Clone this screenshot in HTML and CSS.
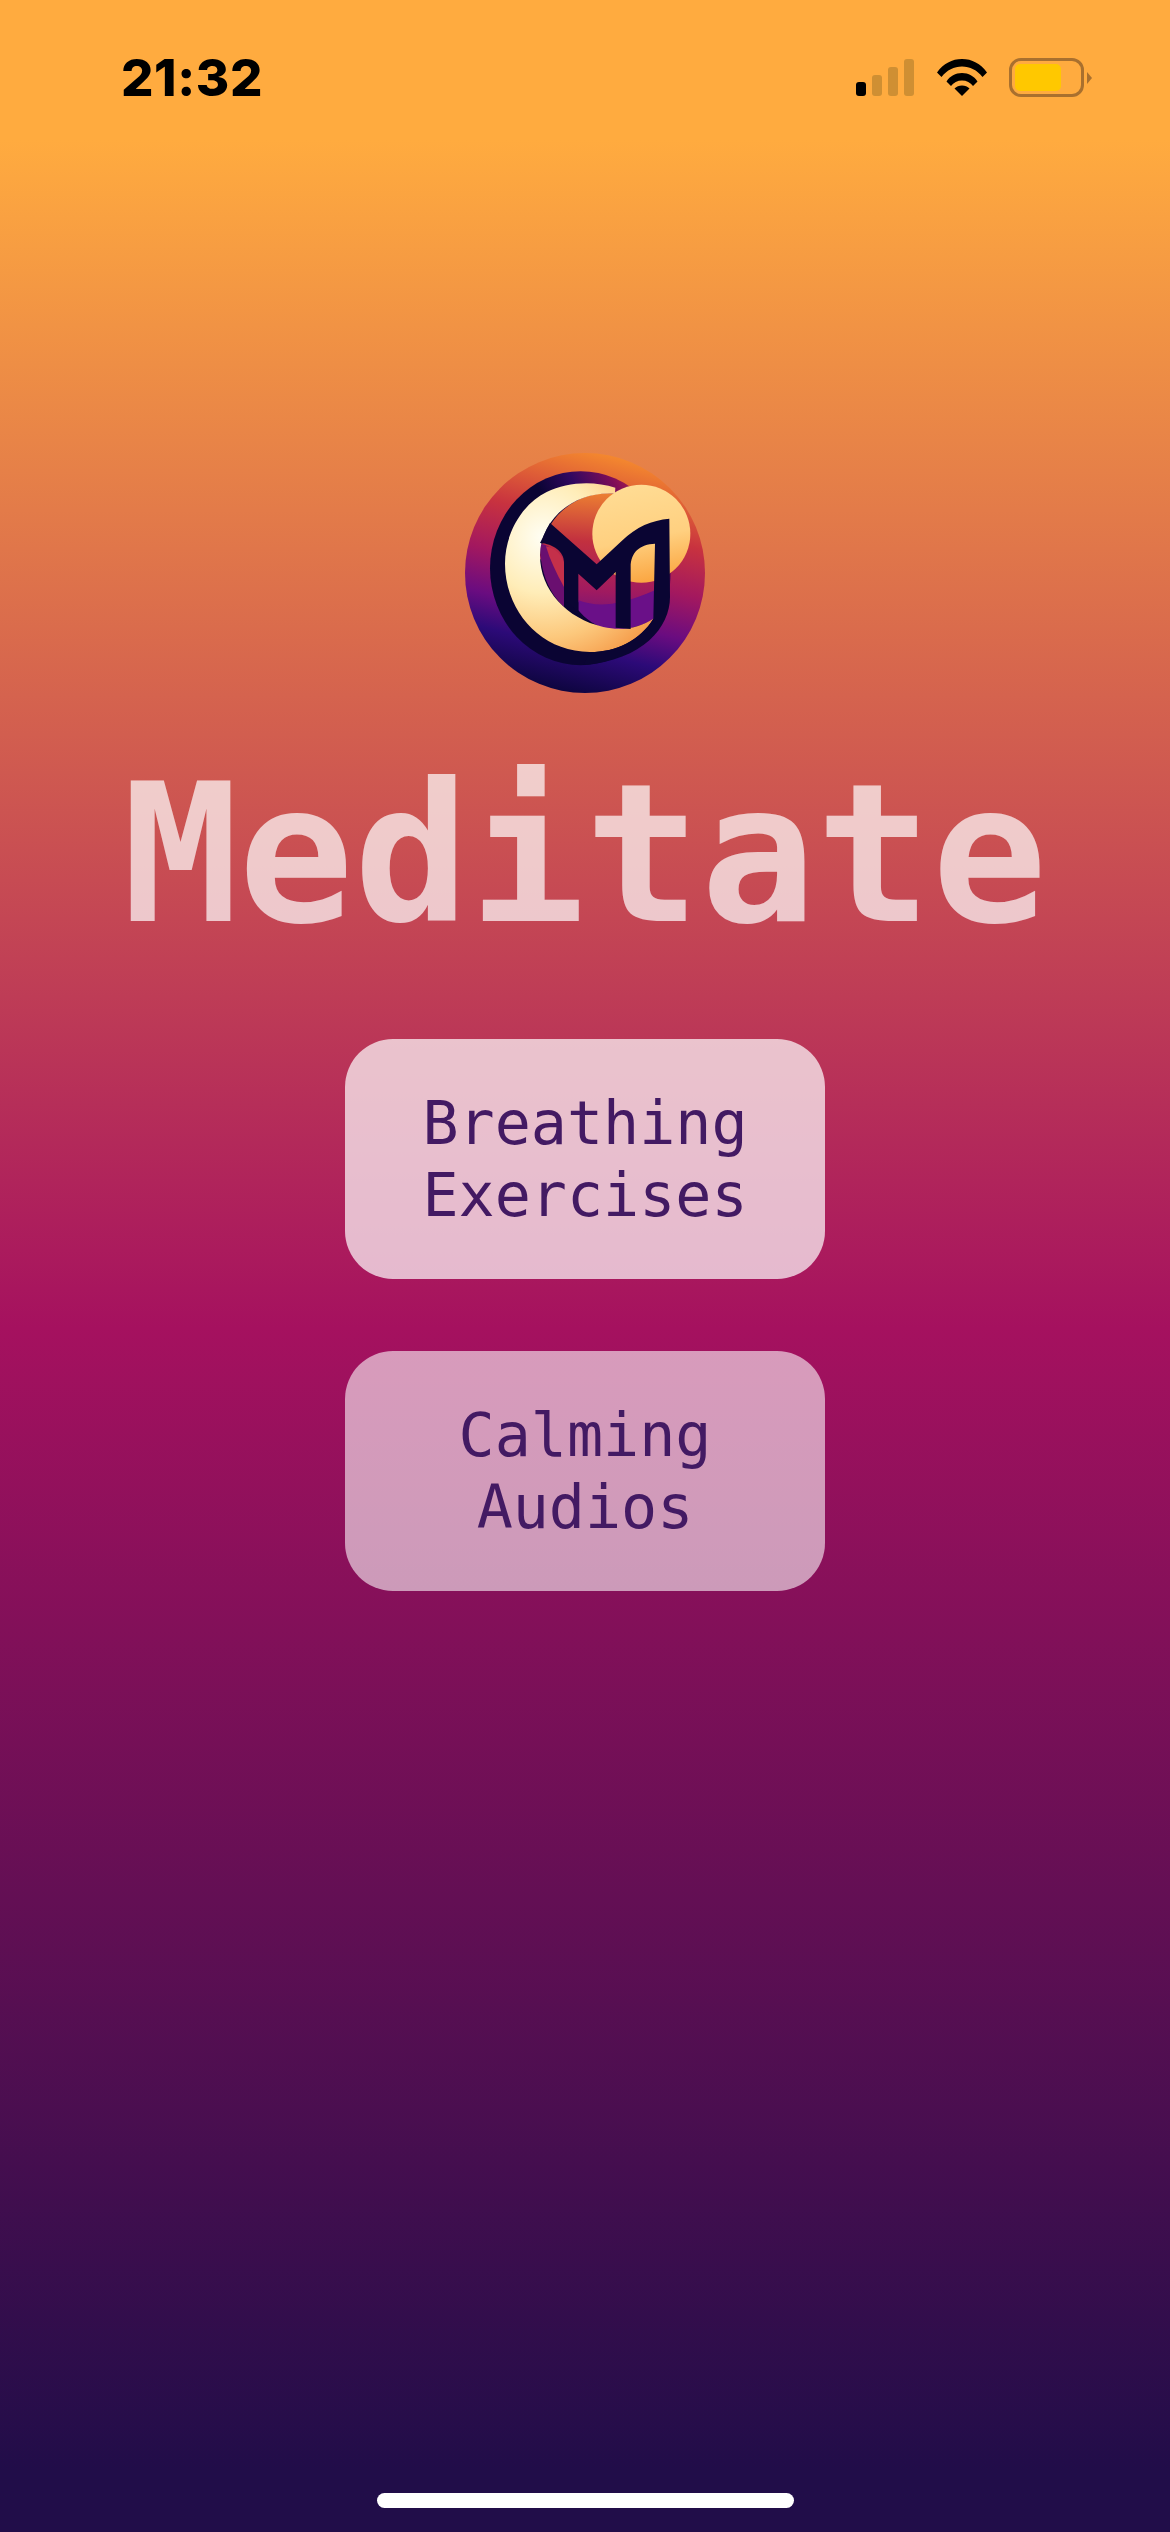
FILE: index.html
```html
<!DOCTYPE html>
<html lang="en">
<head>
<meta charset="utf-8">
<title>Meditate</title>
<link rel="stylesheet" href="styles.css">
</head>
<body>
<div class="screen">
  <header class="status">
    <span class="time">21:32</span>
    <div class="status-icons">
      <div class="signal">
        <span class="bar bar-1"></span>
        <span class="bar bar-2"></span>
        <span class="bar bar-3"></span>
        <span class="bar bar-4"></span>
      </div>
      <svg class="wifi" viewBox="0 0 50 37" width="50" height="37">
        <path d="M0 13.5C6.5 4.500 15 0 25 0s18.500 4.500 25 13.500l-4.500 4.500C40 11 33 7.500 25 7.500S10 11 4.500 18z"/>
        <path d="M9.500 22.500C13 17 18.500 14 25 14s12 3 15.500 8.500L36 27c-2.500-3.500-6.500-5.500-11-5.500S16.500 23.500 14 27z"/>
        <path d="M25 37l-7.500-7.500C19.500 27.500 22 26.500 25 26.500s5.500 1 7.500 3z"/>
      </svg>
      <div class="battery">
        <div class="battery-body"><span class="battery-fill"></span></div>
        <span class="battery-nub"></span>
      </div>
    </div>
  </header>
  <main class="hero">
    <svg class="logo" viewBox="75 68 720 720" width="240" height="240">
      <defs>
        <linearGradient id="disc" x1="0.68" y1="0.02" x2="0.45" y2="1">
          <stop offset="0" stop-color="#f58a2e"/>
          <stop offset="0.3" stop-color="#c8323f"/>
          <stop offset="0.5" stop-color="#a3185f"/>
          <stop offset="0.68" stop-color="#6a0c80"/>
          <stop offset="0.82" stop-color="#2c0a78"/>
          <stop offset="1" stop-color="#0e0540"/>
        </linearGradient>
        <linearGradient id="ring" x1="0.84" y1="0.02" x2="0.4" y2="0.3">
          <stop offset="0" stop-color="#c42a45"/>
          <stop offset="0.3" stop-color="#7d0d58"/>
          <stop offset="0.65" stop-color="#300860"/>
          <stop offset="1" stop-color="#0a0433"/>
        </linearGradient>
        <linearGradient id="inner" x1="0.55" y1="0" x2="0.5" y2="1">
          <stop offset="0" stop-color="#ec7f32"/>
          <stop offset="0.35" stop-color="#c2303f"/>
          <stop offset="0.7" stop-color="#a01a60"/>
          <stop offset="1" stop-color="#5a1088"/>
        </linearGradient>
        <radialGradient id="cres" gradientUnits="userSpaceOnUse" cx="310" cy="320" r="420">
          <stop offset="0" stop-color="#fffef4"/>
          <stop offset="0.4" stop-color="#ffedb8"/>
          <stop offset="0.72" stop-color="#fcc87c"/>
          <stop offset="1" stop-color="#f59a48"/>
        </radialGradient>
        <linearGradient id="sun" x1="0.4" y1="0" x2="0.6" y2="1">
          <stop offset="0" stop-color="#ffdc94"/>
          <stop offset="0.55" stop-color="#ffd080"/>
          <stop offset="1" stop-color="#fba540"/>
        </linearGradient>
      </defs>
      <circle cx="435" cy="428" r="360" fill="url(#disc)"/>
      <ellipse cx="422" cy="413.500" rx="272" ry="291" fill="url(#ring)"/>
      <path d="M300 385A203 203 0 0 1 525 190L650 300V565L500 610Z" fill="url(#inner)"/>
      <path d="M300 340C345 345 372 395 372 450V530C330 490 300 430 300 340Z" fill="#6a0f70"/>
      <path d="M318 348C345 352 372 380 372 400V470C350 430 330 390 318 348Z" fill="#c4304a"/>
      <path d="M415 510C470 530 530 530 645 480L645 565C600 590 540 605 500 596C470 590 435 565 415 540Z" fill="#6a1088"/>
      <path d="M526 172C460 150 380 155 320 185C245 222 195 310 195 400C195 540 300 665 450 665C530 665 600 630 640 565C600 592 545 603 490 590C380 565 300 480 300 375C300 270 400 180 525 190Z" fill="url(#cres)"/>
      <circle cx="604" cy="310" r="147" fill="url(#sun)"/>
      <path d="M300 338L330 278L470 402L545 332C590 288 635 270 688 265L690 500C690 590 610 690 430 704L450 665C530 665 600 630 640 565L645 340C600 342 572 365 572 410V596L527 592V425L470 480L415 430V545L372 505V395C372 365 340 340 300 338Z" fill="#0a0533"/>
    </svg>
    <h1 class="title">Meditate</h1>
    <nav class="actions">
      <a class="action">Breathing<br>Exercises</a>
      <a class="action action-dim">Calming<br>Audios</a>
    </nav>
  </main>
  <div class="home-indicator"></div>
</div>
</body>
</html>
```

FILE: styles.css
```css
* { box-sizing: border-box; }
html, body { margin: 0; padding: 0; }
body { width: 1170px; height: 2532px; overflow: hidden; }

.screen {
  width: 1170px;
  height: 2532px;
  display: flex;
  flex-direction: column;
  align-items: center;
  background: linear-gradient(180deg, #ffab3f 0, #ffab3f 140px, #a5115f 1328px, #210d49 2470px, #210d49 2532px);
}

.status {
  width: 100%;
  height: 156px;
  padding: 49px 78px 0 121px;
  display: flex;
  justify-content: space-between;
  align-items: flex-start;
  flex-shrink: 0;
}
.time {
  font-family: Inter, "Liberation Sans", sans-serif;
  font-weight: 800;
  font-size: 51px;
  letter-spacing: 0.6px;
  line-height: 58px;
  color: #000;
}
.status-icons {
  display: flex;
  align-items: flex-end;
  height: 39px;
  margin-top: 9px;
}
.signal { display: flex; align-items: flex-end; gap: 6px; height: 38px; padding-bottom: 1px; }
.bar { width: 10px; border-radius: 3px; background: #cf8f33; }
.bar-1 { height: 14px; background: #000; }
.bar-2 { height: 21px; }
.bar-3 { height: 29px; }
.bar-4 { height: 37px; }
.wifi { margin-left: 23px; margin-bottom: 1px; fill: #000; display: block; }
.battery { display: flex; align-items: center; margin-left: 22px; height: 39px; }
.battery-body {
  width: 75px;
  height: 39px;
  padding: 3px;
  border: 3px solid #a9702e;
  border-radius: 12px;
}
.battery-fill { display: block; width: 46px; height: 27px; border-radius: 5px; background: #ffc800; }
.battery-nub {
  width: 0;
  height: 0;
  margin-left: 3px;
  border-left: 5px solid #a9702e;
  border-top: 6px solid transparent;
  border-bottom: 6px solid transparent;
}

.hero { display: flex; flex-direction: column; align-items: center; flex: 1; padding-top: 297px; }
.logo { display: block; }
.title {
  margin: 50px 0 0;
  font-family: "DejaVu Sans Mono", monospace;
  font-weight: 700;
  font-size: 192px;
  line-height: 224px;
  color: rgba(255, 255, 255, 0.7);
}
.actions { display: flex; flex-direction: column; gap: 72px; margin-top: 72px; }
.action {
  width: 480px;
  height: 240px;
  display: flex;
  align-items: center;
  justify-content: center;
  text-align: center;
  border-radius: 48px;
  background: rgba(255, 255, 255, 0.7);
  font-family: "DejaVu Sans Mono", monospace;
  font-size: 60px;
  line-height: 72px;
  color: #431a63;
}
.action-dim { background: rgba(255, 255, 255, 0.58); }

.home-indicator {
  width: 417px;
  height: 15px;
  margin-bottom: 24px;
  border-radius: 8px;
  background: #fff;
  flex-shrink: 0;
}
```
